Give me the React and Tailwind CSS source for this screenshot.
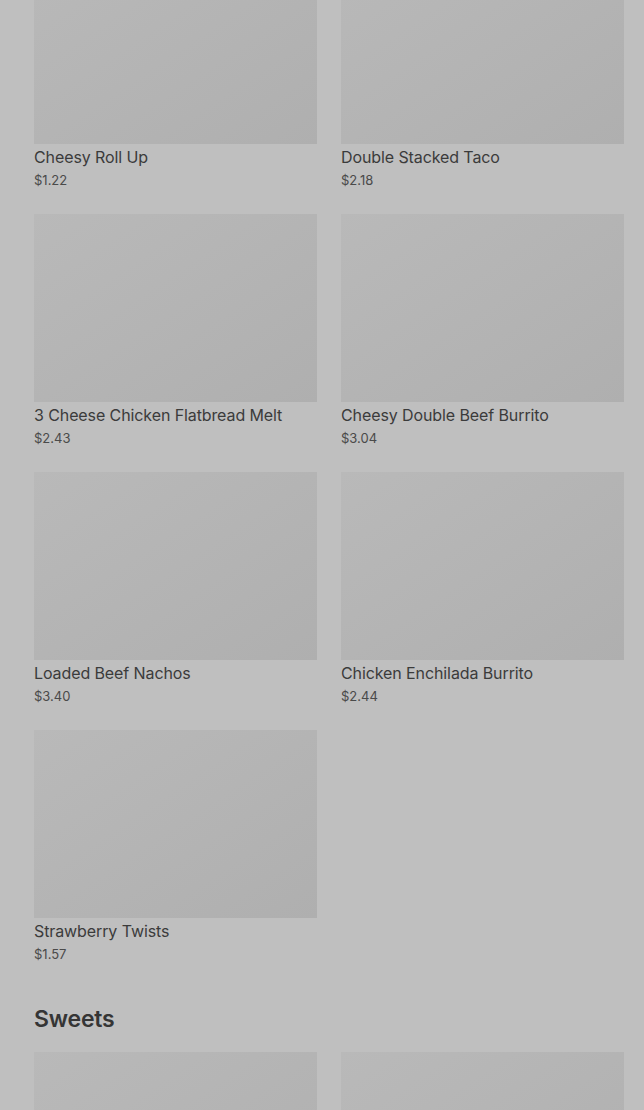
import React from "react";

const mains = [
  { name: "Cheesy Roll Up", price: "$1.22" },
  { name: "Double Stacked Taco", price: "$2.18" },
  { name: "3 Cheese Chicken Flatbread Melt", price: "$2.43" },
  { name: "Cheesy Double Beef Burrito", price: "$3.04" },
  { name: "Loaded Beef Nachos", price: "$3.40" },
  { name: "Chicken Enchilada Burrito", price: "$2.44" },
  { name: "Strawberry Twists", price: "$1.57" },
];

// sweets row sits below the fold, only the image tops show
const sweets = ["sweet-1", "sweet-2"];

function MenuCard({ item }) {
  return (
    <div className="flex flex-col">
      <div className="h-[188px] w-full bg-gradient-to-br from-[#b9b9b9] to-[#afafaf]" />
      <p className="mt-[1px] text-[16px] leading-6 tracking-[-0.1px] text-[#3b3b3b]">{item.name}</p>
      <p className="mt-[1px] text-[13px] leading-5 text-[#4a4a4a]">{item.price}</p>
    </div>
  );
}

export default function App() {
  return (
    <div
      className="h-[1110px] overflow-hidden bg-[#bfbfbf] pl-[34px] pr-[20px]"
      style={{ fontFamily: "Inter, 'Noto Sans', sans-serif" }}
    >
      <div className="mt-[-44px] grid grid-cols-2 gap-x-6 gap-y-6">
        {mains.map((item) => (
          <MenuCard key={item.name} item={item} />
        ))}
      </div>

      <h2 className="mt-[39px] text-[23px] font-semibold leading-8 tracking-[-0.2px] text-[#353535]">Sweets</h2>

      <div className="mt-[17px] grid grid-cols-2 gap-x-6 gap-y-6">
        {sweets.map((key) => (
          <div key={key} className="h-[188px] w-full bg-gradient-to-br from-[#b9b9b9] to-[#afafaf]" />
        ))}
      </div>
    </div>
  );
}
